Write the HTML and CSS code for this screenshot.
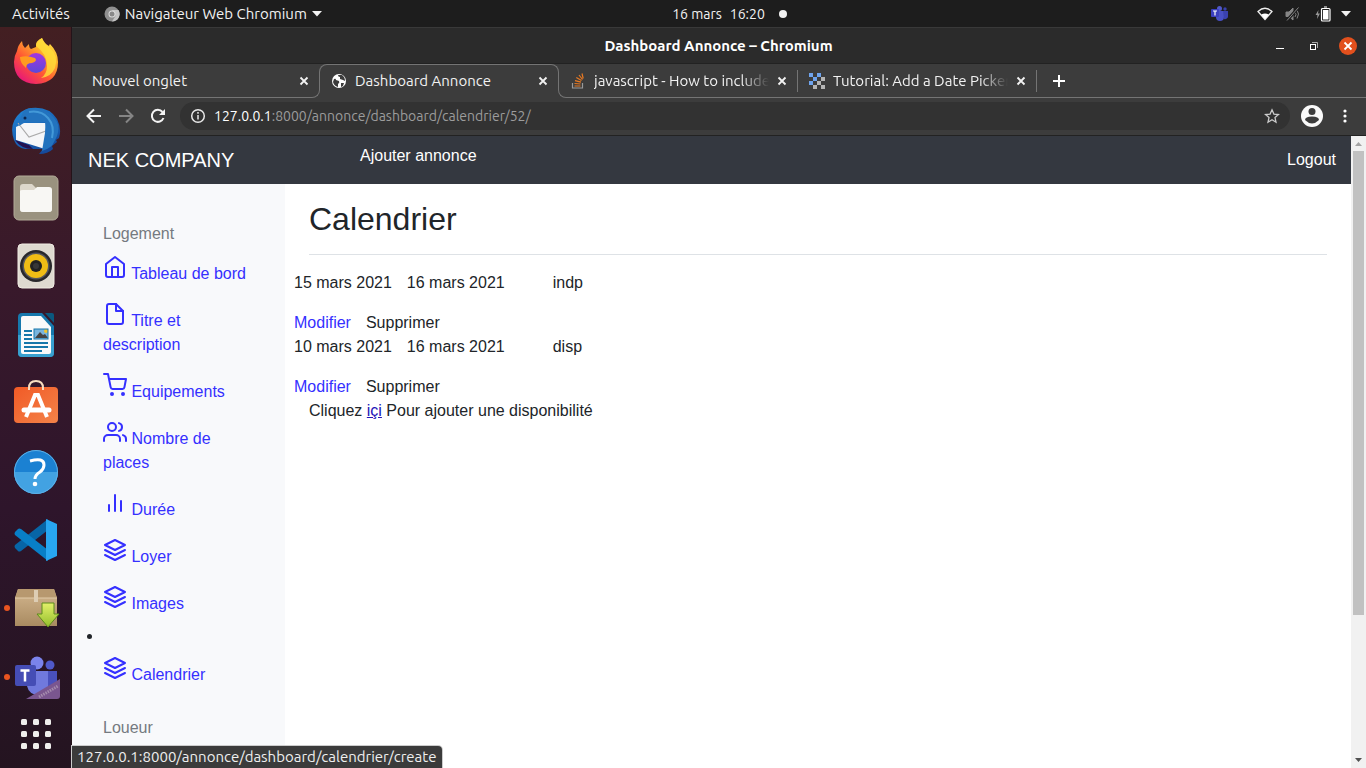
FILE: index.html
```html
<!DOCTYPE html>
<html lang="fr">
<head>
<meta charset="utf-8">
<title>Dashboard Annonce</title>
<link rel="stylesheet" href="styles.css">
</head>
<body>
<svg class="defs" aria-hidden="true">
  <defs>
    <linearGradient id="foxBody" x1="1" y1="0" x2="0.2" y2="1"><stop offset="0" stop-color="#fff44f"/><stop offset=".35" stop-color="#ffb02a"/><stop offset=".65" stop-color="#ff5634"/><stop offset="1" stop-color="#e5127f"/></linearGradient>
    <linearGradient id="foxGlobe" x1="0.5" y1="0" x2="0.5" y2="1"><stop offset="0" stop-color="#a435e0"/><stop offset="1" stop-color="#5b49d8"/></linearGradient>
    <linearGradient id="birdBody" x1="0" y1="0" x2="0.6" y2="1"><stop offset="0" stop-color="#2187d8"/><stop offset="1" stop-color="#154a9c"/></linearGradient>
    <linearGradient id="bagFill" x1="0" y1="0" x2="1" y2="1"><stop offset="0" stop-color="#f15a26"/><stop offset="1" stop-color="#f48349"/></linearGradient>
    <linearGradient id="boxFill" x1="0" y1="0" x2="0" y2="1"><stop offset="0" stop-color="#d3b68f"/><stop offset="1" stop-color="#a98b61"/></linearGradient>
    <linearGradient id="arrowFill" x1="0" y1="0" x2="0" y2="1"><stop offset="0" stop-color="#e3f06a"/><stop offset="1" stop-color="#93bf2c"/></linearGradient>
    <clipPath id="teamsClip"><rect width="48" height="44" rx="3"/></clipPath>
    <symbol id="close" viewBox="0 0 10 10"><path d="M1.500 1.500l7 7M8.500 1.500l-7 7" stroke="currentColor" stroke-width="1.800"/></symbol>
    <symbol id="layers" viewBox="0 0 24 24"><path d="M12 2L2 7l10 5 10-5-10-5zM2 17l10 5 10-5M2 12l10 5 10-5"/></symbol>
  </defs>
</svg>
<div class="desktop">
  <header class="topbar">
    <div class="topbar-left">
      <button class="top-item">Activités</button>
      <button class="top-item app-menu">
        <svg width="16" height="16" viewBox="0 0 16 16"><circle cx="8" cy="8" r="7.500" fill="#8f8f8f"/><path d="M8 4h6.500A7.500 7.500 0 0 1 8 15.500L11.500 10z" fill="#c4c4c4"/><circle cx="8" cy="8" r="3.500" fill="#ddd"/><circle cx="8" cy="8" r="2.500" fill="#888"/></svg>
        <span>Navigateur Web Chromium</span>
        <svg width="10" height="6" viewBox="0 0 10 6"><path d="M0 0h10L5 5.500z" fill="#f2f2f2"/></svg>
      </button>
    </div>
    <button class="top-item clock"><span>16 mars</span><span>16:20</span><i class="dot"></i></button>
    <div class="topbar-right">
      <svg class="tray-teams" width="17" height="15" viewBox="0 0 17 15"><circle cx="8.500" cy="2.500" r="2.500" fill="#5059c9"/><circle cx="14" cy="3" r="1.700" fill="#3a42ae"/><path d="M5 5h8v6a4 4 0 0 1-8 0z" fill="#4850c4"/><path d="M12 5h5v5a3 3 0 0 1-4 3z" fill="#3a42ae"/><rect y="3" width="8" height="8" rx="1" fill="#3b3fbf"/><path d="M2 5h4M4 5v4.500" stroke="#fff" stroke-width="1.200"/></svg>
      <svg width="16" height="14" viewBox="0 0 16 14"><path d="M1 4.500Q8-2 15 4.500L8 12.500z" fill="none" stroke="#eee" stroke-width="1.300"/><path d="M4.200 7.500q3.800-2 7.600 0L8 12.500z" fill="#fff"/></svg>
      <svg width="16" height="14" viewBox="0 0 16 14" fill="none" stroke="#858585"><path d="M1 5h3l4-4v12L4 9.500H1z" fill="#858585"/><path d="M10 5q2 2.500 0 5M12 3q3 4 0 8.500"/><path d="M2 13.500L13.500.5" stroke="#1d1d1d" stroke-width="3"/><path d="M2 13.500L13.500.5"/></svg>
      <svg width="16" height="16" viewBox="0 0 16 16"><path d="M3.500 4L.5 9h2L2 13l3-5.500H3z" fill="#999"/><path d="M7 2.500h7a1 1 0 0 1 1 1V14a1 1 0 0 1-1 1H7.500a1 1 0 0 1-1-1V3.500zM9 1h3" fill="none" stroke="#fff" stroke-width="1.200"/><rect x="8" y="4" width="5.500" height="9.500" fill="#fff"/></svg>
      <svg width="10" height="6" viewBox="0 0 10 6"><path d="M0 0h10L5 5.500z" fill="#f2f2f2"/></svg>
    </div>
  </header>

  <nav class="dock" aria-label="Applications">
    <button class="dock-item" aria-label="Firefox">
      <svg width="46" height="48" viewBox="0 0 46 48"><path d="M4 14Q5 8 9 4q0 4 3 7l4-4q0 4 2 5l5-2Q22 4 29 1q2 5 7 8 0-1 1-2 8 8 8 18 0 21-22 22Q1 46 1 25q0-6 3-11z" fill="url(#foxBody)"/><path d="M23 9q0-5 6-8 2 6 8 10 9 8 5 20-4 9-14 10 6-4 6-12 0-12-11-20z" fill="#ffdf3a" opacity=".8"/><circle cx="23" cy="26" r="10" fill="url(#foxGlobe)"/><path d="M7 20q7-2 15 1 3 3-3 5-6 0-6 5Q7 26 7 20z" fill="#ff9b20"/></svg>
    </button>
    <button class="dock-item" aria-label="Thunderbird">
      <svg width="50" height="48" viewBox="0 0 50 48"><path d="M3 34Q-3 17 10 6q4-3 10-4Q38 0 46 13q5 10 2 19l-3 2 1 2-5 4 1 3q-5 5-14 5l4-5H14Q6 42 3 34z" fill="url(#birdBody)"/><path d="M5 21l8-4h22l-1 26-29-9z" fill="#f5f6f8"/><path d="M7 17l11 14 17-6" fill="none" stroke="#aaa" stroke-width="1.200"/><path d="M4 34l14 5 4 4q-12 0-18-9z" fill="#241151"/><path d="M22 2q-9-1-12 9l-2 9q3-1 5-5 10 3 21 1 1 8-1 17l-2 12q10-3 12-9l3-6Q51 17 39 8 32 2 22 2z" fill="#2373be"/><path d="M18 6q12-2 19 6 7 8 4 20" fill="none" stroke="#4399d8" stroke-width="2"/><circle cx="14" cy="12" r="1.500" fill="#0b2550"/></svg>
    </button>
    <button class="dock-item" aria-label="Fichiers">
      <svg width="46" height="46" viewBox="0 0 46 46"><rect x="1" y="1" width="44" height="44" rx="5" fill="#9a927f" stroke="#b2aa98"/><path d="M7 12q0-3 3-3h9l4 4h13q3 0 3 3v18q0 3-3 3H10q-3 0-3-3z" fill="#ddd7cb"/><path d="M7 16q0-1 3-1h11l3-3h12q3 0 3 3v19q0 3-3 3H10q-3 0-3-3z" fill="#f8f7f4"/></svg>
    </button>
    <button class="dock-item" aria-label="Rhythmbox">
      <svg width="38" height="46" viewBox="0 0 38 46"><rect x="1" y="1" width="36" height="44" rx="4" fill="#dedad0" stroke="#f0ece3"/><circle cx="19" cy="23" r="16" fill="#28282b"/><circle cx="19" cy="23" r="13.500" fill="#55565c"/><circle cx="19" cy="23" r="12" fill="#f0bd15"/><circle cx="19" cy="23" r="6" fill="#222"/><circle cx="19" cy="23" r="3" fill="#373737"/></svg>
    </button>
    <button class="dock-item" aria-label="LibreOffice Writer">
      <svg width="38" height="46" viewBox="0 0 38 46"><path d="M5 1h20l12 13v27q0 4-4 4H5q-4 0-4-4V5q0-4 4-4z" fill="#1678ad"/><path d="M1 23h36v18q0 4-4 4H5q-4 0-4-4z" fill="#38a0cf"/><path d="M28 1h7q2 0 2 2v8z" fill="#0b587f"/><path d="M4 6q0-2 2-2h18l10 11v25q0 2-2 2H6q-2 0-2-2z" fill="#fafafa"/><path d="M7 19h8M7 23h8M7 27h8M7 31h24M7 35h24M7 39h18" stroke="#1677aa" stroke-width="2"/><rect x="17" y="17" width="14" height="10" fill="#79b5de"/><circle cx="29" cy="19" r="2" fill="#f0c531"/><path d="M18 26l5-6 3 3 2-1 3 4z" fill="#444"/><rect x="17" y="17" width="14" height="10" fill="none" stroke="#1677aa"/></svg>
    </button>
    <button class="dock-item" aria-label="Logiciels">
      <svg width="46" height="46" viewBox="0 0 46 46"><rect x="1" y="7" width="44" height="36" rx="4" fill="url(#bagFill)"/><path d="M16 10V8q0-7 7-7t7 7v2" fill="none" stroke="#f9dec0" stroke-width="2"/><path d="M13 37l9-22h3l9 22" fill="none" stroke="#fff" stroke-width="4"/><path d="M11 30h25" stroke="#fff" stroke-width="5" stroke-linecap="round"/></svg>
    </button>
    <button class="dock-item" aria-label="Aide">
      <svg width="46" height="46" viewBox="0 0 46 46"><circle cx="23" cy="23" r="22" fill="#1b81d2"/><path d="M1 23h44a22 22 0 0 1-44 0z" fill="#42a2e2"/><circle cx="23" cy="23" r="21.500" fill="none" stroke="#5eb0e6"/><path d="M17 12q14-4 14 4 0 4-4 7-5 3-5 7" fill="none" stroke="#fff" stroke-width="3"/><circle cx="22" cy="35" r="2.300" fill="#fff"/></svg>
    </button>
    <button class="dock-item" aria-label="Visual Studio Code">
      <svg width="44" height="44" viewBox="0 0 44 44"><path d="M1 30l3 3q1 1 3 0L34 12V1L1 27q-1 1 0 3z" fill="#0765a6"/><path d="M1 14l3-3q1-1 3 0l27 21v11L1 17q-1-1 0-3z" fill="#087fc7"/><path d="M32 1l11 5v32l-11 5z" fill="#28a7f1"/></svg>
    </button>
    <button class="dock-item running" aria-label="Installation">
      <svg width="48" height="42" viewBox="0 0 48 42"><path d="M6 2h36l3 9v28H3V11z" fill="url(#boxFill)"/><path d="M6 2h36l3 9H3z" fill="#b7986f"/><path d="M3 11h42" stroke="#e1cba9"/><path d="M22 3h4v12h-4z" fill="#ddcdb4"/><path d="M30 16h12v11h5L36 40 25 27h5z" fill="url(#arrowFill)" stroke="#5d8c1c"/></svg>
    </button>
    <button class="dock-item running" aria-label="Teams">
      <svg width="48" height="44" viewBox="0 0 48 44"><g clip-path="url(#teamsClip)"><circle cx="25" cy="8" r="6.500" fill="#7b83eb"/><circle cx="38" cy="10" r="4.500" fill="#5059c9"/><path d="M34 16h11v14q0 7-9 7z" fill="#4951bd"/><path d="M17 16h19v16q-1 8-9 8-10 0-12-9z" fill="#7079dd"/><rect x="3" y="10" width="21" height="21" rx="2" fill="#454db5"/><path d="M8.500 15.500h9M13 15.500v11" stroke="#fff" stroke-width="2.500"/><path d="M14 44l34-20v20z" fill="#7a568f"/><path d="M27 42l19-11" stroke="#a48bad" stroke-width="3" stroke-dasharray="1.500 1"/></g></svg>
    </button>
    <button class="dock-apps" aria-label="Afficher les applications">
      <svg width="32" height="32" viewBox="0 0 32 32" fill="#efeeec"><rect x="1" y="1" width="6" height="6" rx="1.500"/><rect x="13" y="1" width="6" height="6" rx="1.500"/><rect x="25" y="1" width="6" height="6" rx="1.500"/><rect x="1" y="13" width="6" height="6" rx="1.500"/><rect x="13" y="13" width="6" height="6" rx="1.500"/><rect x="25" y="13" width="6" height="6" rx="1.500"/><rect x="1" y="25" width="6" height="6" rx="1.500"/><rect x="13" y="25" width="6" height="6" rx="1.500"/><rect x="25" y="25" width="6" height="6" rx="1.500"/></svg>
    </button>
  </nav>

  <section class="window">
    <div class="titlebar">
      <span class="window-title">Dashboard Annonce – Chromium</span>
      <div class="window-controls">
        <button aria-label="Réduire"><svg width="10" height="10" viewBox="0 0 10 10"><path d="M1 7.500h8" stroke="#fff"/></svg></button>
        <button aria-label="Restaurer"><svg width="10" height="10" viewBox="0 0 10 10" fill="none"><path d="M3 1.500h5.500V7" stroke="#aaa"/><rect x="1.500" y="3.500" width="5" height="5" stroke="#fff"/></svg></button>
        <button class="window-close" aria-label="Fermer"><svg width="10" height="10"><use href="#close"/></svg></button>
      </div>
    </div>

    <div class="tabstrip">
      <div class="tab-group before-active">
        <div class="tab first"><span class="tab-title">Nouvel onglet</span><button class="tab-close" aria-label="Fermer l'onglet"><svg width="10" height="10"><use href="#close"/></svg></button></div>
      </div>
      <div class="tab active">
        <svg width="16" height="16" viewBox="0 0 16 16"><circle cx="8" cy="8" r="7" fill="#fff"/><path d="M3 6q2-1 2 1l3 1q1 2-1 3v3q-4-1-5-5zM7 2q0 2 2 2v2l3 1 2 1q0-4-3-6zM10 10l3 0-1 3-2 1z" fill="#3c3c3c"/></svg>
        <span class="tab-title">Dashboard Annonce</span><button class="tab-close" aria-label="Fermer l'onglet"><svg width="10" height="10"><use href="#close"/></svg></button>
      </div>
      <div class="tab-group after-active">
        <div class="tab">
          <svg width="16" height="16" viewBox="0 0 16 16" fill="none"><path d="M2.500 10v5h10v-5" stroke="#999" stroke-width="1.200"/><path d="M4.500 13h6M4.500 10.500l6 .5M5 7.700l6 1.500M6.300 4.500l5.200 3M9 2l3.500 4.500M12 .5l1.200 5" stroke="#e87922" stroke-width="1.200"/></svg>
          <span class="tab-title">javascript - How to include</span><button class="tab-close" aria-label="Fermer l'onglet"><svg width="10" height="10"><use href="#close"/></svg></button>
        </div>
        <div class="tab">
          <svg width="16" height="16" viewBox="0 0 16 16"><path d="M0 0h4v4H0zM8 0h4v4H8zM4 4h4v4H4zM0 8h4v4H0z" fill="#6fa4ee"/><path d="M12 4h4v4h-4zM8 8h4v4H8zM4 12h4v4H4zM12 12h4v4h-4z" fill="#b5b5b5"/></svg>
          <span class="tab-title">Tutorial: Add a Date Picker</span><button class="tab-close" aria-label="Fermer l'onglet"><svg width="10" height="10"><use href="#close"/></svg></button>
        </div>
        <button class="new-tab" aria-label="Nouvel onglet"><svg width="12" height="12" viewBox="0 0 12 12"><path d="M6 0v12M0 6h12" stroke="#fff" stroke-width="2"/></svg></button>
      </div>
    </div>

    <div class="toolbar">
      <button aria-label="Retour"><svg width="16" height="16" viewBox="0 0 16 16" fill="none" stroke="#f4f4f4" stroke-width="2"><path d="M15 8H2M8 1.500L1.500 8 8 14.500"/></svg></button>
      <button aria-label="Avancer"><svg width="16" height="16" viewBox="0 0 16 16" fill="none" stroke="#858585" stroke-width="2"><path d="M1 8h13M8 1.500L14.500 8 8 14.500"/></svg></button>
      <button aria-label="Actualiser"><svg width="16" height="16" viewBox="0 0 16 16" fill="none"><path d="M13.500 10A6 6 0 1 1 12.500 4" stroke="#f4f4f4" stroke-width="2"/><path d="M15 1v6H9z" fill="#f4f4f4"/></svg></button>
      <div class="address">
        <svg width="16" height="16" viewBox="0 0 16 16" fill="none" stroke="#e8e8e8" stroke-width="1.500"><circle cx="8" cy="8" r="6.300"/><path d="M8 7v4.500M8 4v1.700"/></svg>
        <a class="url" href="#"><b>127.0.0.1</b>:8000/annonce/dashboard/calendrier/52/</a>
        <button class="bookmark" aria-label="Ajouter aux favoris"><svg width="16" height="16" viewBox="0 0 16 16"><path d="M8 1.800l1.900 4.300 4.600.4-3.500 3.100 1 4.600L8 11.800l-4 2.400 1-4.600-3.500-3.100 4.600-.4z" fill="none" stroke="#ccc" stroke-width="1.300"/></svg></button>
      </div>
      <button class="profile" aria-label="Profil"><svg width="22" height="22" viewBox="0 0 22 22"><circle cx="11" cy="11" r="11" fill="#fafafa"/><circle cx="11" cy="6.500" r="3.500" fill="#3c3c3c"/><path d="M4 15q0-3.500 7-3.500t7 3.500q-7 7-14 0z" fill="#3c3c3c"/></svg></button>
      <button aria-label="Menu"><svg width="4" height="14" viewBox="0 0 4 14" fill="#fff"><circle cx="2" cy="2" r="1.600"/><circle cx="2" cy="7" r="1.600"/><circle cx="2" cy="12" r="1.600"/></svg></button>
    </div>

    <div class="viewport">
      <div class="page">
        <header class="navbar">
          <a class="brand" href="#">NEK COMPANY</a>
          <a class="add-link" href="#">Ajouter annonce</a>
          <a class="logout" href="#">Logout</a>
        </header>
        <div class="page-body">
          <nav class="sidebar">
            <h6 class="side-heading">Logement</h6>
            <ul class="side-list">
              <li><a href="#"><svg class="feather" viewBox="0 0 24 24"><path d="M3 9l9-7 9 7v11a2 2 0 0 1-2 2H5a2 2 0 0 1-2-2z"/><path d="M9 22V12h6v10"/></svg> Tableau de bord</a></li>
              <li><a href="#"><svg class="feather" viewBox="0 0 24 24"><path d="M13 2H6a2 2 0 0 0-2 2v16a2 2 0 0 0 2 2h12a2 2 0 0 0 2-2V9z"/><path d="M13 2v7h7"/></svg> Titre et description</a></li>
              <li><a href="#"><svg class="feather" viewBox="0 0 24 24"><circle cx="9" cy="21" r="1"/><circle cx="20" cy="21" r="1"/><path d="M1 1h4l2.680 13.390a2 2 0 0 0 2 1.610h9.720a2 2 0 0 0 2-1.610L23 6H6"/></svg> Equipements</a></li>
              <li><a href="#"><svg class="feather" viewBox="0 0 24 24"><path d="M17 21v-2a4 4 0 0 0-4-4H5a4 4 0 0 0-4 4v2"/><circle cx="9" cy="7" r="4"/><path d="M23 21v-2a4 4 0 0 0-3-3.870M16 3.130a4 4 0 0 1 0 7.750"/></svg> Nombre de places</a></li>
              <li><a href="#"><svg class="feather" viewBox="0 0 24 24"><path d="M18 20V10M12 20V4M6 20v-6"/></svg> Durée</a></li>
              <li><a href="#"><svg class="feather"><use href="#layers"/></svg> Loyer</a></li>
              <li><a href="#"><svg class="feather"><use href="#layers"/></svg> Images</a></li>
              <li class="bulleted"><a href="#"><svg class="feather"><use href="#layers"/></svg> Calendrier</a></li>
            </ul>
            <h6 class="side-heading">Loueur</h6>
          </nav>
          <main class="content">
            <h1 class="page-title">Calendrier</h1>
            <div class="period"><span>15 mars 2021</span><span>16 mars 2021</span><span class="state">indp</span></div>
            <div class="actions"><a href="#">Modifier</a><span>Supprimer</span></div>
            <div class="period"><span>10 mars 2021</span><span>16 mars 2021</span><span class="state">disp</span></div>
            <div class="actions"><a href="#">Modifier</a><span>Supprimer</span></div>
            <p class="hint">Cliquez <a href="#">içi</a> Pour ajouter une disponibilité</p>
          </main>
        </div>
      </div>
      <div class="scrollbar" aria-hidden="true">
        <svg width="15" height="15" viewBox="0 0 15 15"><path d="M4 10h7L7.500 6z" fill="#a3a3a3"/></svg>
        <div class="track"><div class="thumb"></div></div>
        <svg width="15" height="15" viewBox="0 0 15 15"><path d="M4 5h7L7.500 9z" fill="#505050"/></svg>
      </div>
      <div class="status">127.0.0.1:8000/annonce/dashboard/calendrier/create</div>
    </div>
  </section>
</div>
</body>
</html>
```
FILE: styles.css
```css
* { box-sizing: border-box; }
body { margin: 0; font-family: Ubuntu, "Noto Sans", sans-serif; font-size: 15px; line-height: 20px; color: #f2f2f2; }
button { background: none; border: 0; padding: 0; margin: 0; font: inherit; color: inherit; display: flex; align-items: center; justify-content: center; }
svg { flex: none; }
a { text-decoration: none; color: inherit; }
.defs { position: absolute; width: 0; height: 0; }

.desktop { display: grid; grid-template: 27px minmax(0, 1fr) / 72px minmax(0, 1fr); height: 100vh; overflow: hidden; }

/* GNOME top bar */
.topbar { grid-column: 1 / -1; background: #1d1d1d; display: grid; grid-template-columns: 1fr auto 1fr; align-items: center; padding: 0 15px 0 12px; font-size: 14px; }
.topbar-left, .topbar-right { display: flex; align-items: center; }
.topbar-left { gap: 34px; font-size: 15px; }
.app-menu { gap: 5px; }
.clock { gap: 8px; padding-left: 96px; font-size: 14px; }
.dot { width: 8px; height: 8px; border-radius: 50%; background: #f2f2f2; margin-left: 6px; }
.topbar-right { justify-content: flex-end; gap: 12px; }
.topbar-right svg:nth-last-child(2) { margin-left: 2px; margin-right: -2px; }
.tray-teams { margin-right: 17px; }

/* Dock */
.dock { display: flex; flex-direction: column; background: linear-gradient(#431f22, #38192b 35%, #2e152b 65%, #241420); border-right: 1px solid #241319; }
.dock-item { flex: 1; position: relative; }
.dock-apps { height: 57px; padding-bottom: 12px; }
.running::before { content: ""; position: absolute; left: 4px; top: calc(50% - 3px); width: 6px; height: 6px; border-radius: 50%; background: #e95420; }

/* Browser window */
.window { display: flex; flex-direction: column; min-height: 0; background: #3c3c3c; }
.titlebar { height: 37px; display: grid; grid-template-columns: 1fr auto 1fr; align-items: center; background: #2b2b2b; border-top: 1px solid #393939; border-bottom: 1px solid #222; padding-right: 9px; }
.window-title { grid-column: 2; padding-left: 8px; font-weight: 700; color: #fff; }
.window-controls { display: flex; justify-content: flex-end; gap: 16px; }
.window-controls button { width: 18px; height: 18px; }
.window-controls .window-close { background: #e2501d; border-radius: 50%; color: #fff; }

.tabstrip { display: flex; height: 34px; flex: none; }
.tab-group { display: flex; position: relative; }
.tab-group::after { content: ""; position: absolute; inset: 8px 0 0; border-bottom: 1px solid #747474; pointer-events: none; }
.before-active::after { border-right: 1px solid #747474; border-bottom-right-radius: 8px; }
.after-active { flex: 1; }
.after-active::after { border-left: 1px solid #747474; border-bottom-left-radius: 8px; }
.tab { width: 240px; display: flex; align-items: center; gap: 8px; padding: 0 10px 0 12px; position: relative; }
.tab + .tab { width: 239px; padding-left: 11px; }
.tab.first { width: 248px; padding: 0 11px 0 20px; }
.tab.active { width: 238px; padding: 0 10px 0 11px; }
.tab.active::before { content: ""; position: absolute; inset: 0 -1px 8px; border: 1px solid #747474; border-bottom: 0; border-radius: 8px 8px 0 0; pointer-events: none; }
.tab-title { flex: 1; overflow: hidden; white-space: nowrap; }
.after-active .tab-title { mask-image: linear-gradient(to right, #000 calc(100% - 28px), transparent); }
.after-active .tab { border-right: 1px solid transparent; border-image: linear-gradient(transparent 7px, #747474 7px, #747474 27px, transparent 27px) 1; }
.tab-close { width: 10px; height: 20px; }
.new-tab { width: 43px; }

.toolbar { display: flex; align-items: center; height: 38px; flex: none; padding: 0 19px 1px 14px; gap: 16px; border-bottom: 1px solid #222; }
.address { flex: 1; min-width: 0; height: 28px; border-radius: 14px; background: #323232; display: flex; align-items: center; gap: 8px; padding: 0 10px; margin-left: -2px; font-size: 14px; }
.url { flex: 1; color: #9c9c9c; }
.url b { font-weight: 400; color: #fff; }
.profile { margin: 0 4px 0 -5px; }

/* Web page */
.viewport { flex: 1; min-height: 0; display: flex; position: relative; background: #fff; color: #212529; }
.page { flex: 1; min-width: 0; overflow: hidden; font: 16px/24px "Liberation Sans", Arial, sans-serif; display: flex; flex-direction: column; }
.navbar { display: flex; height: 48px; flex: none; background: #343840; color: #fff; padding: 0 15px 0 16px; align-items: center; }
.brand { font-size: 20px; width: 272px; }
.add-link { padding-bottom: 8px; }
.logout { margin-left: auto; }
.page-body { display: flex; flex: 1; min-height: 0; }
.sidebar { flex: 0 0 213px; background: #f8f9fb; padding: 38px 15px 0; }
.side-heading { margin: 0; padding: 0 16px; font-size: 16px; font-weight: 400; line-height: 24px; color: #757a80; }
.side-list { list-style: none; margin: 1px 0 21px; padding: 0; }
.side-list a { display: block; padding: 8px 16px; color: #3530ff; }
.bulleted { list-style: disc inside; }
.feather { width: 24px; height: 24px; fill: none; stroke: currentColor; stroke-width: 2; stroke-linecap: round; stroke-linejoin: round; }
.content { flex: 1; min-width: 0; padding: 16px 24px; }
.page-title { margin: 0 0 16px; padding-bottom: 16px; font-size: 32px; font-weight: 400; line-height: 38px; border-bottom: 1px solid #dee2e6; }
.period, .actions { display: flex; gap: 15px; margin-left: -15px; }
.period { margin-bottom: 16px; }
.state { padding-left: 33px; }
.actions a { color: #3530ff; }
.hint { margin: 0; }
.hint a { color: #2414b8; text-decoration: underline; }

.scrollbar { width: 15px; background: #f1f1f1; display: flex; flex-direction: column; }
.scrollbar svg { display: block; }
.track { flex: 1; padding: 0 2px; }
.thumb { height: 77%; background: #c1c1c1; }
.status { position: absolute; left: 0; bottom: 0; padding: 1px 6px 1px 5px; background: #3b3b3b; color: #efefef; border-top-right-radius: 4px; box-shadow: 0 0 0 1px #ccc; }
```
